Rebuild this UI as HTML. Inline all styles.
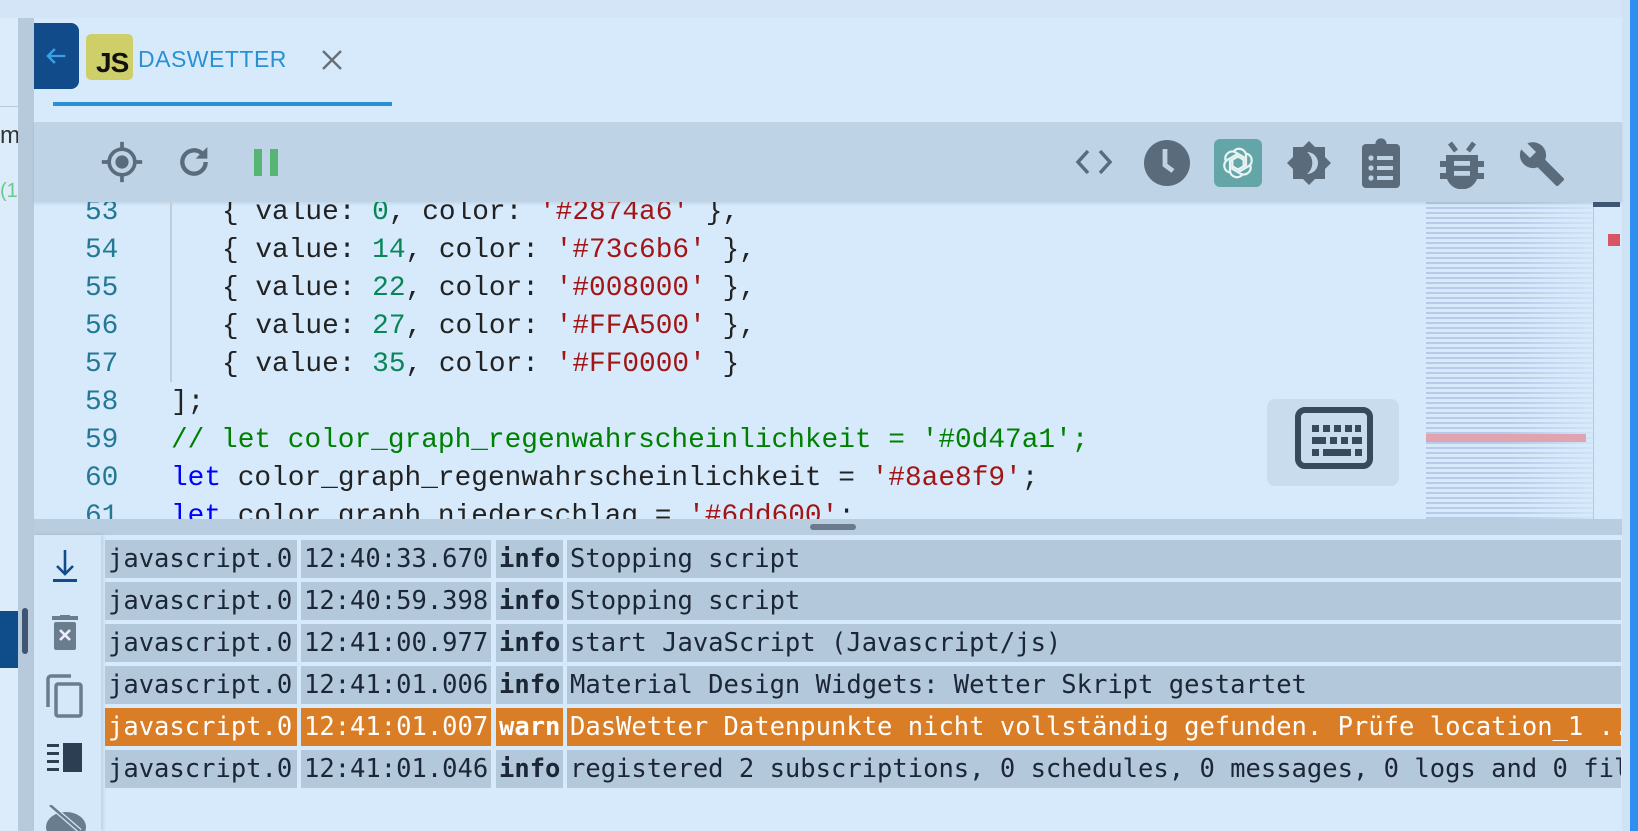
<!DOCTYPE html>
<html><head><meta charset="utf-8"><style>
*{margin:0;padding:0;box-sizing:border-box}
body{width:1638px;height:831px;overflow:hidden;background:#d6eafc;font-family:"Liberation Sans",sans-serif;position:relative}
.abs{position:absolute}
.code{font-family:"Liberation Mono",monospace;font-size:27.8px;line-height:38px}
.code span{white-space:pre}
.ln{color:#237893;position:absolute;left:51px}
.k{color:#0000ff}.n{color:#098658}.s{color:#a31515}.c{color:#008000}.t{color:#222}
.L{position:relative;height:38px}
.L>span+span{position:absolute}
.row{position:absolute;left:105px;height:38px;font-family:"DejaVu Sans Mono",monospace;font-size:25.5px;color:#1b2636}
.row div{position:absolute;top:0;height:38px;background:#b3c8db;line-height:38px;padding-left:3px;white-space:nowrap;overflow:hidden}
.row .a{left:0;width:192px}.row .b{left:196px;width:190px}.row .c3{left:391px;width:67px;font-weight:bold}.row .d{left:462px;width:1054px}
.row.w div{background:#d97e26;color:#fff}
.ic{position:absolute}
</style></head><body>
<div class="abs" style="left:0;top:0;width:18px;height:831px;background:#dcecfb"></div>
<div class="abs" style="left:0;top:106px;width:18px;height:1px;background:#b9c8d6"></div>
<div class="abs" style="left:0;top:122px;font-size:24px;color:#333">m</div>
<div class="abs" style="left:0;top:180px;font-size:20px;color:#6bc88a">(1</div>
<div class="abs" style="left:0;top:611px;width:18px;height:57px;background:#0e4c8a"></div>
<div class="abs" style="left:18px;top:0;width:16px;height:831px;background:#b7cadb"></div>
<div class="abs" style="left:22px;top:608px;width:6px;height:46px;border-radius:3px;background:#3e5573"></div>
<div class="abs" style="left:0;top:0;width:1638px;height:18px;background:#d3e5f6"></div>
<div class="abs" style="left:1622px;top:0;width:8px;height:831px;background:#d0e3f5"></div>
<div class="abs" style="left:1630px;top:0;width:8px;height:831px;background:#2f8ff0"></div>
<div class="abs" style="left:34px;top:23px;width:45px;height:66px;background:#124b8a;border-radius:0 8px 8px 0"></div>
<svg class="ic" style="left:42px;top:42px" width="28" height="28" viewBox="0 0 24 24"><path d="M20 12H5M11 6l-6 6 6 6" stroke="#3aa0e8" stroke-width="2" fill="none"/></svg>
<div class="abs" style="left:86px;top:34px;width:47px;height:46px;background:#cfcf6a;border-radius:5px"></div>
<div class="abs" style="left:96px;top:47px;font-size:28px;font-weight:bold;color:#111;letter-spacing:-1px">JS</div>
<div class="abs" style="left:138px;top:46px;font-size:23px;color:#2a90d6;letter-spacing:.5px">DASWETTER</div>
<svg class="ic" style="left:321px;top:49px" width="22" height="22" viewBox="0 0 22 22"><path d="M2 2L20 20M20 2L2 20" stroke="#666e78" stroke-width="2.4"/></svg>
<div class="abs" style="left:53px;top:102px;width:339px;height:4px;background:#2b8fd3"></div>
<div class="abs" style="left:34px;top:122px;width:1588px;height:80px;background:#bed3e6;box-shadow:0 2px 3px rgba(0,0,0,.08)"></div>
<svg class="ic" style="left:100px;top:140px" width="44" height="44" viewBox="0 0 24 24"><circle cx="12" cy="12" r="7" stroke="#5a6b7c" stroke-width="2" fill="none"/><circle cx="12" cy="12" r="3.6" fill="#5a6b7c"/><path d="M12 1v4M12 19v4M1 12h4M19 12h4" stroke="#5a6b7c" stroke-width="2"/></svg>
<svg class="ic" style="left:174px;top:142px" width="40" height="40" viewBox="0 0 24 24"><path d="M19 12a7 7 0 1 1-2.2-5.1" stroke="#5a6b7c" stroke-width="2.6" fill="none"/><path d="M20 3v7h-7z" fill="#5a6b7c"/></svg>
<div class="abs" style="left:254px;top:149px;width:8px;height:27px;background:#57b574"></div>
<div class="abs" style="left:270px;top:149px;width:8px;height:27px;background:#57b574"></div>
<svg class="ic" style="left:1074px;top:146px" width="40" height="32" viewBox="0 0 40 32"><path d="M14 5L4 16l10 11M26 5l10 11-10 11" stroke="#5a6b7c" stroke-width="3.5" fill="none"/></svg>
<svg class="ic" style="left:1143px;top:139px" width="48" height="48" viewBox="0 0 24 24"><circle cx="12" cy="12" r="11.5" fill="#5a6b7c"/><path d="M11 5v8l4 3" stroke="#bed3e6" stroke-width="2.4" fill="none"/></svg>
<div class="abs" style="left:1214px;top:139px;width:48px;height:48px;background:#64a6a8;border-radius:6px"></div>
<svg class="ic" style="left:1220px;top:145px" width="36" height="36" viewBox="0 0 36 36" fill="none" stroke="#e8f4f4" stroke-width="2.2"><g transform="translate(18 18)"><path d="M-4 -12 a7 7 0 0 1 12 4 v10 l-8 4.5"/><path d="M-4 -12 a7 7 0 0 1 12 4 v10 l-8 4.5" transform="rotate(60)"/><path d="M-4 -12 a7 7 0 0 1 12 4 v10 l-8 4.5" transform="rotate(120)"/><path d="M-4 -12 a7 7 0 0 1 12 4 v10 l-8 4.5" transform="rotate(180)"/><path d="M-4 -12 a7 7 0 0 1 12 4 v10 l-8 4.5" transform="rotate(240)"/><path d="M-4 -12 a7 7 0 0 1 12 4 v10 l-8 4.5" transform="rotate(300)"/></g></svg>
<svg class="ic" style="left:1285px;top:139px" width="48" height="48" viewBox="0 0 24 24"><path d="M12 1l3 3h5v5l3 3-3 3v5h-5l-3 3-3-3H4v-5l-3-3 3-3V4h5z" fill="#5a6b7c"/><path d="M11 6.5a5.5 5.5 0 0 1 0 11a7 7 0 0 0 0-11z" fill="#bed3e6"/></svg>
<svg class="ic" style="left:1362px;top:138px" width="38" height="50" viewBox="0 0 19 25"><rect x="0" y="3" width="19" height="22" rx="2" fill="#5a6b7c"/><circle cx="9.5" cy="3" r="2.8" fill="#5a6b7c"/><g fill="#bed3e6"><circle cx="4.5" cy="10" r="1.3"/><circle cx="4.5" cy="15" r="1.3"/><circle cx="4.5" cy="20" r="1.3"/><rect x="7.5" y="9" width="8" height="2"/><rect x="7.5" y="14" width="8" height="2"/><rect x="7.5" y="19" width="8" height="2"/></g></svg>
<svg class="ic" style="left:1440px;top:139px" width="44" height="50" viewBox="0 0 22 25"><path d="M5 2l3 4M17 2l-3 4" stroke="#5a6b7c" stroke-width="2.5"/><path d="M3 8h16v3h3v3h-3v3h3v3h-3.5a8 8 0 0 1-15 0H0v-3h3v-3H0v-3h3z" fill="#5a6b7c"/><rect x="7" y="11" width="8" height="2.4" fill="#bed3e6"/><rect x="7" y="16" width="8" height="2.4" fill="#bed3e6"/></svg>
<svg class="ic" style="left:1518px;top:140px" width="48" height="48" viewBox="0 0 24 24"><path d="M22.7 19l-9.1-9.1c.9-2.3.4-5-1.5-6.9-2-2-5-2.4-7.4-1.3L9 6 6 9 1.6 4.7C.4 7.1.9 10.1 2.9 12.1c1.9 1.9 4.6 2.4 6.9 1.5l9.1 9.1c.4.4 1 .4 1.4 0l2.3-2.3c.5-.4.5-1.1.1-1.4z" fill="#5a6b7c"/></svg>
<div class="abs" style="left:34px;top:202px;width:1588px;height:317px;overflow:hidden">
<div class="abs" style="left:136px;top:0;width:2px;height:180px;background:#c0ccd8"></div>
<div class="code" style="position:absolute;left:0;top:-8px;width:1380px">
<div class="L"><span class="ln">53</span><span class="t" style="left:188px">{ value: <span class="n">0</span>, color: <span class="s">'#2874a6'</span> },</span></div>
<div class="L"><span class="ln">54</span><span class="t" style="left:188px">{ value: <span class="n">14</span>, color: <span class="s">'#73c6b6'</span> },</span></div>
<div class="L"><span class="ln">55</span><span class="t" style="left:188px">{ value: <span class="n">22</span>, color: <span class="s">'#008000'</span> },</span></div>
<div class="L"><span class="ln">56</span><span class="t" style="left:188px">{ value: <span class="n">27</span>, color: <span class="s">'#FFA500'</span> },</span></div>
<div class="L"><span class="ln">57</span><span class="t" style="left:188px">{ value: <span class="n">35</span>, color: <span class="s">'#FF0000'</span> }</span></div>
<div class="L"><span class="ln">58</span><span class="t" style="left:137px">];</span></div>
<div class="L"><span class="ln">59</span><span class="c" style="left:137px">// let color_graph_regenwahrscheinlichkeit = '#0d47a1';</span></div>
<div class="L"><span class="ln">60</span><span class="t" style="left:137px"><span class="k">let</span> color_graph_regenwahrscheinlichkeit = <span class="s">'#8ae8f9'</span>;</span></div>
<div class="L"><span class="ln">61</span><span class="t" style="left:137px"><span class="k">let</span> color_graph_niederschlag = <span class="s">'#6dd600'</span>;</span></div>
</div>
<div class="abs" style="left:1233px;top:197px;width:132px;height:87px;background:#c9dcee;border-radius:8px"></div>
<svg class="ic" style="left:1261px;top:205px" width="78" height="64" viewBox="0 0 78 64"><rect x="3" y="3" width="72" height="56" rx="7" fill="none" stroke="#364a5e" stroke-width="6"/><g fill="#364a5e"><rect x="17" y="18" width="7" height="7"/><rect x="28" y="18" width="7" height="7"/><rect x="39" y="18" width="7" height="7"/><rect x="50" y="18" width="7" height="7"/><rect x="60" y="18" width="6" height="7"/><rect x="17" y="30" width="14" height="7"/><rect x="35" y="30" width="7" height="7"/><rect x="46" y="30" width="7" height="7"/><rect x="57" y="30" width="10" height="7"/><rect x="17" y="42" width="7" height="7"/><rect x="28" y="42" width="28" height="7"/><rect x="60" y="42" width="7" height="7"/></g></svg>
<div class="abs" style="left:1392px;top:0;width:167px;height:317px;background:repeating-linear-gradient(180deg,rgba(80,90,160,.22) 0 2px,transparent 2px 5px);-webkit-mask:linear-gradient(90deg,#000 50%,rgba(0,0,0,.2))"></div>
<div class="abs" style="left:1392px;top:232px;width:160px;height:8px;background:#e0a3b0"></div>
<div class="abs" style="left:1559px;top:0;width:1px;height:317px;background:#b8c8d8"></div>
<div class="abs" style="left:1559px;top:0;width:27px;height:5px;background:#3e5573"></div>
<div class="abs" style="left:1574px;top:32px;width:12px;height:12px;background:#d95566"></div>
</div>
<div class="abs" style="left:34px;top:519px;width:1588px;height:16px;background:#b8cde0"></div>
<div class="abs" style="left:810px;top:524px;width:46px;height:6px;border-radius:3px;background:#6b7b8c"></div>
<div class="abs" style="left:34px;top:535px;width:67px;height:296px;background:#d5e8fa;box-shadow:2px 0 4px rgba(0,0,0,.12)"></div>
<svg class="ic" style="left:50px;top:548px" width="30" height="36" viewBox="0 0 30 36"><path d="M15 2v24M7 18l8 8 8-8" stroke="#124b8a" stroke-width="2.6" fill="none"/><rect x="3" y="31" width="24" height="3" fill="#124b8a"/></svg>
<svg class="ic" style="left:52px;top:615px" width="26" height="36" viewBox="0 0 26 36"><rect x="0" y="1" width="26" height="4" fill="#6a7d8f"/><rect x="8" y="0" width="10" height="3" fill="#6a7d8f"/><rect x="2" y="7" width="22" height="28" rx="2" fill="#6a7d8f"/><path d="M8 15l10 10M18 15L8 25" stroke="#eef" stroke-width="2.6"/></svg>
<svg class="ic" style="left:45px;top:673px" width="40" height="46" viewBox="0 0 40 46"><path d="M26 3H6a3 3 0 0 0-3 3v28" stroke="#6a7d8f" stroke-width="3.5" fill="none"/><rect x="11" y="11" width="25" height="32" rx="2" stroke="#6a7d8f" stroke-width="3.5" fill="none"/></svg>
<svg class="ic" style="left:47px;top:743px" width="36" height="30" viewBox="0 0 36 30"><g fill="#2c3e52"><rect x="0" y="1" width="12" height="3"/><rect x="0" y="9" width="12" height="3"/><rect x="0" y="17" width="12" height="3"/><rect x="0" y="25" width="12" height="3"/><rect x="16" y="0" width="19" height="29"/></g></svg>
<svg class="ic" style="left:44px;top:805px" width="44" height="26" viewBox="0 0 44 26"><ellipse cx="22" cy="22" rx="20" ry="15" fill="#6a7d8f"/><path d="M6 0l30 26" stroke="#d5e8fa" stroke-width="5"/><path d="M6 0l30 26" stroke="#6a7d8f" stroke-width="2.5"/></svg>
<div class="row" style="top:540px"><div class="a">javascript.0</div><div class="b">12:40:33.670</div><div class="c3">info</div><div class="d">Stopping script</div></div>
<div class="row" style="top:582px"><div class="a">javascript.0</div><div class="b">12:40:59.398</div><div class="c3">info</div><div class="d">Stopping script</div></div>
<div class="row" style="top:624px"><div class="a">javascript.0</div><div class="b">12:41:00.977</div><div class="c3">info</div><div class="d">start JavaScript (Javascript/js)</div></div>
<div class="row" style="top:666px"><div class="a">javascript.0</div><div class="b">12:41:01.006</div><div class="c3">info</div><div class="d">Material Design Widgets: Wetter Skript gestartet</div></div>
<div class="row w" style="top:708px"><div class="a">javascript.0</div><div class="b">12:41:01.007</div><div class="c3">warn</div><div class="d">DasWetter Datenpunkte nicht vollständig gefunden. Prüfe location_1 ...</div></div>
<div class="row" style="top:750px"><div class="a">javascript.0</div><div class="b">12:41:01.046</div><div class="c3">info</div><div class="d">registered 2 subscriptions, 0 schedules, 0 messages, 0 logs and 0 file subscriptions</div></div>
</body></html>
